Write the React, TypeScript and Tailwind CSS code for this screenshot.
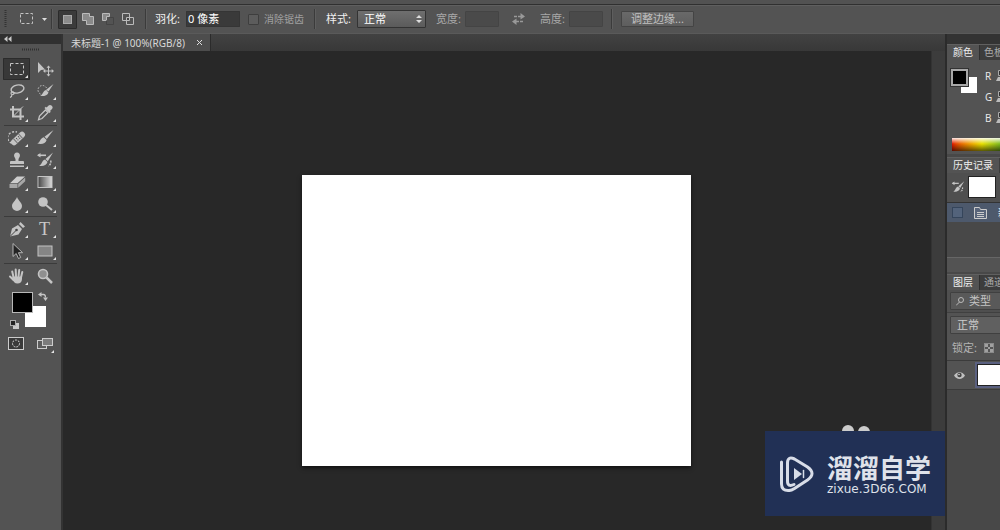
import React, { ReactNode } from "react";

function Icon({ size = 18, className = "", children }: { size?: number; className?: string; children: ReactNode }) {
  return (
    <svg width={size} height={size} viewBox="0 0 18 18" fill="none" stroke="none" className={"shrink-0 " + className} aria-hidden="true">
      {children}
    </svg>
  );
}

const C = "#c4c4c4";

const marquee = <rect x="2.5" y="3.5" width="13" height="11" stroke={C} strokeDasharray="3 2" />;
const move = (
  <g>
    <path d="M2 2v11l3-3 4-.6z" fill={C} />
    <path d="M12.500 6.500v9M8 11h9" stroke={C} />
    <path d="M12.500 5.500l2 2.300h-4zM12.500 16.500l2-2.300h-4zM7 11l2.300-2v4zM18 11l-2.300-2v4z" fill={C} />
  </g>
);
const lasso = (
  <g stroke={C} strokeWidth="1.400">
    <ellipse cx="9.500" cy="7" rx="6.500" ry="4" transform="rotate(-12 9.500 7)" />
    <path d="M4.500 9.500c-2 .5-2 3 0 3s2-2 .5-2.800M4 12.500c0 2-.8 2.500-2 3" strokeWidth="1.200" />
  </g>
);
const quickSelect = (
  <g>
    <circle cx="6.500" cy="8" r="4.500" stroke={C} strokeDasharray="1.500 1.500" />
    <path d="M17.500 2l-7 5.500 2 2zM10 8l2.500 2.500c-1 3-4.500 4-8.500 3.500 3-.8 2.500-5 6-6z" fill={C} />
  </g>
);
const crop = (
  <g stroke={C} strokeWidth="2">
    <path d="M5 2v10.500h11M2 5.500h10.500V16" />
    <path d="M5.500 12L15 2.500" strokeWidth="1" />
  </g>
);
const eyedropper = (
  <g>
    <path d="M15.800 1.800c1.300 1.300.9 2.400.2 3.100l-2 2 .8.800-1.300 1.300-5-5 1.300-1.300.8.800 2-2c.7-.7 1.900-1 3.200.3z" fill={C} />
    <path d="M9.500 6l2.500 2.500-6 6-3.500 1.300L3.500 12z" stroke={C} strokeWidth="1.300" />
  </g>
);
const heal = (
  <g>
    <path d="M3.500 14A7 6 0 0 1 9 3" stroke={C} strokeDasharray="2 1.500" strokeWidth="1.400" />
    <g transform="rotate(-43 10 9.500)">
      <rect x="1.500" y="6.500" width="17" height="6" rx="3" fill={C} />
      <path d="M6.500 6.500v6M13.500 6.500v6" stroke="#777" />
      <path d="M8.500 8.500h1M11 8.500h1M8.500 10.500h1M11 10.500h1" stroke="#444" />
    </g>
  </g>
);
const brush = <path d="M17.500 1L8.500 7.800l2.300 2.200zM7.800 8.300l2.800 2.800c-.9 3.400-4.600 4.700-9.400 3.500 3.200-.9 2.800-5.500 6.600-6.300z" fill={C} />;
const stamp = <path d="M9 1.500a3 3 0 0 1 2.800 4L10.500 8v2H15a1 1 0 0 1 1 1v2H2v-2a1 1 0 0 1 1-1h4.500V8L6.200 5.500A3 3 0 0 1 9 1.500zM2 14.500h14V16H2z" fill={C} />;
const historyBrush = (
  <g>
    <path d="M17 1.500L9.500 8l2.300 2.300zM9 8.500l2.500 2.500c-1 3.500-4.500 4.500-8.500 3.700 3-.7 2.500-5.200 6-6.200z" fill={C} />
    <path d="M2 4.300h8" stroke={C} strokeWidth="1.600" />
    <path d="M1 4.300L4.500 2v4.600z" fill={C} />
    <path d="M14.800 9.500c.3 2.500-.5 4.500-2.300 5.500" stroke={C} strokeWidth="1.500" strokeDasharray="2 1" />
  </g>
);
const eraser = (
  <g>
    <path d="M9 3.500h8l-7.500 6.800H2z" fill="#cdcdcd" />
    <path d="M1.500 11h8v4h-8zM10.200 10.800l7-6.300v3.800l-7 6.500z" fill="#a6a6a6" />
  </g>
);
const gradient = (
  <g>
    <defs>
      <linearGradient id="toolGradient"><stop stopColor="#444" /><stop offset="1" stopColor="#ddd" /></linearGradient>
    </defs>
    <rect x="2" y="3.500" width="14" height="11" fill="url(#toolGradient)" stroke={C} />
  </g>
);
const drop = <path d="M9 2c1.500 4 5 5.500 5 9a5 5 0 0 1-10 0C4 7.500 7.500 6 9 2z" fill={C} />;
const dodge = (
  <g>
    <circle cx="7" cy="7" r="4.800" fill={C} />
    <path d="M10 10l6 5" stroke={C} strokeWidth="2" />
  </g>
);
const pen = (
  <g>
    <path d="M2 16.500L4 8.500l6-3.500 4 4-3.500 5.500z" fill={C} />
    <path d="M11 4l1.500-2 4.500 4.500-2 1.500z" fill={C} />
    <path d="M2 16.500l6-6" stroke="#444" />
    <circle cx="8.500" cy="10" r="1.300" fill="#444" />
  </g>
);
const pathSelect = <path d="M5 1.500v13l3.200-3 2.300 5 2.200-1-2.300-4.800h4.200z" fill="#242424" stroke="#b4b4b4" strokeWidth="1" />;
const rectangle = <rect x="2" y="4" width="14" height="10" fill="#858585" stroke={C} />;
const hand = (
  <g>
    <path d="M4.500 9.500h9.500v2.500c0 3-2 4.500-4.500 4.500-3 0-4-2-5-4z" fill={C} />
    <path d="M5.500 10L4.200 4.500M8 9.500L7.700 2.500M10.500 9.500l.7-6.500M13 10.500l1.300-5.500M5.500 13L2 9.500" stroke={C} strokeWidth="2" strokeLinecap="round" />
  </g>
);
const zoomGlass = (
  <g>
    <circle cx="7" cy="7" r="4.500" fill="#8f8f8f" stroke={C} strokeWidth="1.600" />
    <path d="M10.500 10.500L16 16" stroke={C} strokeWidth="2.500" />
  </g>
);

type Tool = { label: string; icon: ReactNode; active?: boolean; single?: boolean };

const toolGroups: Tool[][] = [
  [
    { label: "矩形选框工具", icon: marquee, active: true },
    { label: "移动工具", icon: move, single: true },
    { label: "套索工具", icon: lasso },
    { label: "快速选择工具", icon: quickSelect },
    { label: "裁剪工具", icon: crop },
    { label: "吸管工具", icon: eyedropper },
  ],
  [
    { label: "污点修复画笔工具", icon: heal },
    { label: "画笔工具", icon: brush },
    { label: "仿制图章工具", icon: stamp },
    { label: "历史记录画笔工具", icon: historyBrush },
    { label: "橡皮擦工具", icon: eraser },
    { label: "渐变工具", icon: gradient },
    { label: "模糊工具", icon: drop },
    { label: "减淡工具", icon: dodge },
  ],
  [
    { label: "钢笔工具", icon: pen },
    { label: "文字工具", icon: null },
    { label: "路径选择工具", icon: pathSelect },
    { label: "矩形工具", icon: rectangle },
  ],
  [
    { label: "抓手工具", icon: hand },
    { label: "缩放工具", icon: zoomGlass, single: true },
  ],
];

function ToolButton({ tool }: { tool: Tool }) {
  return (
    <button
      type="button"
      aria-label={tool.label}
      className={
        "relative flex h-[22px] w-[27px] items-center justify-center rounded-[1px] " +
        (tool.active ? "bg-[#383838] shadow-[inset_0_0_0_1px_#2b2b2b]" : "")
      }
    >
      {tool.icon ? (
        <Icon size={18}>{tool.icon}</Icon>
      ) : (
        <span className="font-['Liberation_Serif',serif] text-[18px] leading-none text-[#c8c8c8]">T</span>
      )}
      {!tool.single && (
        <svg width="3" height="3" className="absolute bottom-0.5 right-0.5" aria-hidden="true"><path d="M3 0v3H0z" fill="#e4e4e4" /></svg>
      )}
    </button>
  );
}

function ToolPanel() {
  return (
    <aside className="flex w-[61px] shrink-0 flex-col bg-[#535353]">
      <div className="flex h-2.5 items-center bg-[#303030] pl-1">
        <svg width="8" height="6" aria-hidden="true"><path d="M3.500 0v6L0 3zM7.500 0v6L4 3z" fill="#c8c8c8" /></svg>
      </div>
      <div className="flex h-3.5 items-start justify-center pt-1">
        <svg width="17" height="3" aria-hidden="true"><path d="M0 1.500h17" stroke="#303030" strokeWidth="2" strokeDasharray="1 1" /></svg>
      </div>
      {toolGroups.map((group, i) => (
        <div key={i}>
          {i > 0 && <div className="mx-1 my-px h-px bg-[#3b3b3b]" />}
          <div className="grid grid-cols-2 gap-x-px px-[3px]">
            {group.map((t) => <ToolButton key={t.label} tool={t} />)}
          </div>
        </div>
      ))}
      <div className="relative mt-[3px] h-[38px]">
        <button type="button" aria-label="背景色" className="absolute left-[25px] top-4 size-[21px] bg-white" />
        <button type="button" aria-label="前景色" className="absolute left-3 top-0.5 size-[21px] border border-[#b8b8b8] bg-black" />
        <button type="button" aria-label="切换颜色" className="absolute left-[38px] top-0.5">
          <svg width="10" height="9"><path d="M2.500 2.500h3q2 0 2 3" stroke={C} strokeWidth="1.300" fill="none" /><path d="M0 2.500L3.500 0v5zM7.500 9L5 5.500h5z" fill={C} /></svg>
        </button>
        <button type="button" aria-label="默认颜色" className="absolute left-2.5 top-[30px]">
          <svg width="9" height="9"><rect x="3" y="3" width="6" height="6" fill="#c8c8c8" /><rect x=".5" y=".5" width="5" height="5" fill="#222" stroke="#aaa" /></svg>
        </button>
      </div>
      <div className="mt-[5px] grid grid-cols-2 px-[3px]">
        <button type="button" aria-label="快速蒙版" className="flex h-5 items-center pl-[5px]">
          <svg width="16" height="13"><rect x=".5" y=".5" width="15" height="12" fill="#3a3a3a" stroke="#ccc" /><circle cx="8" cy="6.500" r="3.500" stroke="#ddd" fill="none" strokeDasharray="2 1" /></svg>
        </button>
        <button type="button" aria-label="屏幕模式" className="relative flex h-5 items-center pl-1.5">
          <svg width="16" height="13"><rect x=".5" y="3.500" width="9" height="8" stroke="#ccc" fill="#5c5c5c" /><rect x="5.500" y="1.500" width="10" height="7" stroke="#ccc" fill="#7b7b7b" /></svg>
          <svg width="3" height="3" className="absolute bottom-0 right-1" aria-hidden="true"><path d="M3 0v3H0z" fill="#e4e4e4" /></svg>
        </button>
      </div>
    </aside>
  );
}

function Divider() {
  return <div className="h-5 w-0.5 shrink-0 border-r border-[#5e5e5e] bg-[#3b3b3b]" />;
}

const dimField = "h-4 w-[34px] rounded-[1px] border border-[#444] bg-[#4a4a4a] px-1";

function OptionsBar() {
  return (
    <header className="flex h-[29px] shrink-0 items-center overflow-hidden whitespace-nowrap border-y border-t-[#5f5f5f] border-b-[#5a5a5a] bg-[#535353] pb-px text-[#f0f0f0]">
      <svg width="3" height="18" className="ml-1 shrink-0" aria-hidden="true"><path d="M1.500 0v18" stroke="#333" strokeWidth="2" strokeDasharray="1 1" /></svg>
      <button type="button" aria-label="当前工具" className="ml-3 flex items-center gap-2">
        <svg width="15" height="12"><rect x="1.500" y=".5" width="12" height="10" stroke={C} fill="none" strokeDasharray="3 2" /></svg>
        <svg width="5" height="3"><path d="M0 0h5L2.500 3z" fill="#ddd" /></svg>
      </button>
      <div className="ml-1 mr-[5px]"><Divider /></div>
      <div className="flex items-center gap-0.5">
        <button type="button" aria-label="新选区" className="flex size-[19px] items-center justify-center rounded-[1px] border border-[#2b2b2b] bg-[#3b3b3b]">
          <svg width="9" height="9"><rect x=".5" y=".5" width="8" height="8" fill="#8b8b8b" stroke="#aaa" /></svg>
        </button>
        <button type="button" aria-label="添加到选区" className="flex h-5 w-[18px] items-center justify-center">
          <svg width="12" height="12"><path d="M.5.5h7v3h4v8h-7v-4h-4z" fill="#8a8a8a" stroke="#bbb" /></svg>
        </button>
        <button type="button" aria-label="从选区减去" className="flex h-5 w-[18px] items-center justify-center">
          <svg width="12" height="12"><path d="M.5.5h7v3h-3v4h-4z" fill="#8a8a8a" stroke="#bbb" /><path d="M7.500 4.500h4v7h-7v-4" fill="none" stroke="#444" /></svg>
        </button>
        <button type="button" aria-label="与选区交叉" className="flex h-5 w-[18px] items-center justify-center">
          <svg width="12" height="12"><path d="M.5.5h7v7h-7zM4.500 4.500h7v7h-7z" fill="none" stroke="#bbb" /><path d="M5 5h2v2H5z" fill="#444" /></svg>
        </button>
      </div>
      <div className="mx-2"><Divider /></div>
      <label htmlFor="feather" className="w-[31px]">羽化:</label>
      <input id="feather" defaultValue="0 像素" className="h-4 w-[54px] rounded-[1px] bg-[#3a3a3a] px-0.5 leading-4 text-white shadow-[inset_0_0_0_1px_#353535]" />
      <label className="ml-2 flex items-center gap-[5px] text-[10px] text-[#a0a0a0]">
        <input type="checkbox" disabled className="size-[11px] appearance-none rounded-[1px] border border-[#3e3e3e] bg-[#5c5c5c]" />
        消除锯齿
      </label>
      <div className="mx-2.5"><Divider /></div>
      <label htmlFor="style" className="w-[31px]">样式:</label>
      <div className="relative">
        <select id="style" className="h-[18px] w-[69px] appearance-none rounded-[1px] border border-[#333] bg-linear-to-b from-[#6f6f6f] to-[#5b5b5b] pl-1.5 leading-4 text-white">
          <option>正常</option>
        </select>
        <svg width="6" height="8" className="pointer-events-none absolute right-1 top-[5px]"><path d="M0 3L3 0l3 3zM0 5h6L3 8z" fill="#ddd" /></svg>
      </div>
      <label htmlFor="width" className="ml-2.5 w-[29px] text-[#a8a8a8]">宽度:</label>
      <input id="width" disabled className={dimField} />
      <button type="button" aria-label="交换宽高" className="mx-[13px]">
        <svg width="13" height="12"><path d="M2 3.500h7M4 8.500h7" stroke="#999" strokeWidth="1.500" strokeDasharray="3 1" /><path d="M8.500 0L13 3.500l-4.500 3zM4.500 5.500L0 8.500 4.500 12z" fill="#999" /></svg>
      </button>
      <label htmlFor="height" className="ml-0.5 w-[29px] text-[#a8a8a8]">高度:</label>
      <input id="height" disabled className={dimField} />
      <div className="mx-2"><Divider /></div>
      <button type="button" className="h-4 w-[73px] rounded-[1px] border border-[#444] bg-linear-to-b from-[#696969] to-[#5e5e5e] leading-3 text-[#c0c0c0]">
        调整边缘...
      </button>
    </header>
  );
}

function PanelTabs({ active, other }: { active: string; other?: string }) {
  return (
    <div role="tablist" className="flex h-4 shrink-0 whitespace-nowrap border-t border-[#606060] bg-[#3d3d3d]">
      <button type="button" role="tab" aria-selected="true" className="bg-[#535353] px-1.5 text-[10px] leading-[15px] text-[#eee]">{active}</button>
      {other && <button type="button" role="tab" aria-selected="false" className="border-l border-[#303030] px-1 text-[10px] leading-[15px] text-[#aaa]">{other}</button>}
    </div>
  );
}

function Channel({ name }: { name: string }) {
  return (
    <div className="flex h-[21px] items-center gap-[5px] text-[10px] text-[#e8e8e8]">
      <span className="w-1.5">{name}</span>
      <svg width="12" height="13" className="shrink-0" aria-hidden="true">
        <path d="M2.500 1.500h7v5h-7z" fill="#333" stroke="#aaa" />
        <path d="M2 8h8l2 4H0z" fill="#bbb" />
      </svg>
    </div>
  );
}

function SidePanels() {
  return (
    <aside className="flex w-[55px] shrink-0 flex-col overflow-hidden border-l-2 border-[#2b2b2b] bg-[#484848]">
      <div className="h-2.5 shrink-0 bg-[#333]" />
      <section className="h-[110px] shrink-0 bg-[#535353]">
        <PanelTabs active="颜色" other="色板" />
        <div className="flex h-[78px] pt-[5px]">
          <div className="relative w-[38px] shrink-0">
            <button type="button" aria-label="背景色" className="absolute left-3.5 top-3 size-4 bg-white" />
            <button type="button" aria-label="前景色" className="absolute left-1 top-1 size-[17px] border-2 border-[#a8a8a8] bg-black outline outline-[#333]" />
          </div>
          <div><Channel name="R" /><Channel name="G" /><Channel name="B" /></div>
        </div>
        <div className="ml-[5px] h-[13px] w-[150px] bg-linear-to-r from-[#e01000] via-[#e8e000] via-20% to-[#00a020] to-40%">
          <div className="h-full bg-linear-to-b from-white/90 via-transparent via-45% to-black/60" />
        </div>
      </section>
      <section className="mt-[3px] flex h-[115px] shrink-0 flex-col">
        <PanelTabs active="历史记录" />
        <div className="flex h-[29px] shrink-0 items-center bg-[#4f4f4f] pb-px">
          <Icon size={14} className="ml-1 mr-[3px]">{historyBrush}</Icon>
          <div className="h-[22px] w-7 shrink-0 border border-[#222] bg-white" />
        </div>
        <div className="flex h-5 shrink-0 items-center whitespace-nowrap border-t border-[#333] bg-[#4d596c] text-[#eee]">
          <input type="checkbox" aria-label="历史记录源" className="ml-[5px] size-[11px] shrink-0 appearance-none border border-[#35455b] bg-[#53637b]" />
          <svg width="13" height="13" className="mx-[11px] shrink-0" aria-hidden="true"><path d="M.5 12.500V1.500h5l1 2h6v9z" fill="#59657a" stroke="#ccc" /><path d="M3 6.500h7M3 8.500h7M3 10.500h7" stroke="#ccc" /></svg>
          <span>新建</span>
        </div>
        <div className="grow bg-[#484848]" />
        <div className="h-[15px] shrink-0 border-t border-[#666] bg-[#535353]" />
      </section>
      <section className="mt-0.5 flex grow flex-col">
        <PanelTabs active="图层" other="通道" />
        <div className="flex h-[22px] shrink-0 items-center bg-[#4f4f4f] pl-[3px]">
          <button type="button" className="flex h-[18px] w-16 shrink-0 items-center gap-[5px] rounded-[1px] border border-[#404040] bg-[#595959] pl-[5px] text-[#c4c4c4]">
            <svg width="8" height="9"><circle cx="5" cy="3" r="2.500" stroke="#bbb" fill="none" /><path d="M3.500 5L0 8.500" stroke="#bbb" /></svg>
            类型
          </button>
        </div>
        <div className="flex h-6 shrink-0 items-center border-t border-[#404040] bg-[#535353] pl-[3px]">
          <select aria-label="混合模式" className="h-[18px] w-24 shrink-0 appearance-none rounded-[1px] border border-[#404040] bg-[#606060] pl-1.5 leading-4 text-[#ccc]">
            <option>正常</option>
          </select>
        </div>
        <div className="flex h-6 shrink-0 items-center whitespace-nowrap bg-[#535353] pl-[5px] text-[#b4b4b4]">
          <span className="w-8 shrink-0">锁定:</span>
          <button type="button" aria-label="锁定透明像素" className="grid size-2.5 shrink-0 grid-cols-3 border border-[#8a8a8a]">
            {Array.from({ length: 9 }, (_, i) => <span key={i} className={i % 2 ? "bg-[#555]" : "bg-[#a0a0a0]"} />)}
          </button>
        </div>
        <div className="flex h-[30px] shrink-0 items-center border-y border-[#3b3b3b] bg-[#535353]">
          <button type="button" aria-label="图层可见性" className="ml-[7px] mr-2.5">
            <svg width="11" height="9"><path d="M0 4.500C2.500 0 8.500 0 11 4.500 8.500 9 2.500 9 0 4.500z" fill="#c0c0c0" /><circle cx="5.500" cy="4" r="2.200" fill="#444" /><circle cx="5" cy="3.500" r=".8" fill="#ddd" /></svg>
          </button>
          <div className="h-[26px] w-9 shrink-0 border-2 border-[#5a6080] bg-[#222] p-px"><div className="h-full bg-white" /></div>
        </div>
        <div className="grow bg-[#484848]" />
      </section>
    </aside>
  );
}

function Watermark() {
  return (
    <div className="absolute bottom-3.5 right-[55px]">
      <svg width="30" height="12" className="absolute -top-[7px] left-[76px]" aria-hidden="true"><circle cx="7" cy="7" r="6" fill="#ccc" /><circle cx="23" cy="8" r="6" fill="#ccc" /></svg>
      <div className="relative flex h-[85px] w-[180px] items-center bg-[#213055] pl-3.5 text-[#dfe2ea]">
        <svg width="36" height="38" viewBox="0 0 36 38" fill="none" stroke="#d8dde8" strokeWidth="3" strokeLinecap="round" aria-hidden="true">
          <path d="M2.500 7v22q0 7 7.500 6.500" />
          <path d="M15 29.500q-6.500 3-6.500-3.500V8q0-7 7-4l13 8q9 6.500 0 13l-13 8.500q-3 2-5.500 2" />
          <path d="M15 13v12l8-6z" fill="#d8dde8" stroke="none" />
          <path d="M24.500 15.500v7" strokeWidth="1.500" />
        </svg>
        <div className="ml-3 whitespace-nowrap">
          <div className="text-[26px] font-bold leading-[30px]">溜溜自学</div>
          <div className="font-['DejaVu_Sans','Liberation_Sans',sans-serif] text-[12px] leading-3">zixue.3D66.COM</div>
        </div>
      </div>
    </div>
  );
}

export default function App() {
  return (
    <div className="relative flex h-screen flex-col overflow-hidden bg-[#282828] font-['Noto_Sans','Noto_Sans_CJK_SC',sans-serif] text-[11px] leading-4">
      <div className="h-[5px] shrink-0 border-b border-[#303030] bg-[#525252]" />
      <OptionsBar />
      <div className="flex min-h-0 grow">
        <ToolPanel />
        <main className="flex min-w-0 grow flex-col border-l-2 border-[#333]">
          <div className="flex h-[17px] shrink-0 bg-linear-to-b from-[#424242] to-[#383838]">
            <div className="flex items-center gap-3 whitespace-nowrap border-r border-[#2b2b2b] bg-[#4d4d4d] px-2 text-[10px] text-[#d8d8d8]">
              <span>未标题-1 @ 100%(RGB/8)</span>
              <button type="button" aria-label="关闭"><svg width="5" height="5"><path d="M0 0l5 5M5 0L0 5" stroke="#ddd" /></svg></button>
            </div>
          </div>
          <div className="flex min-h-0 grow">
            <div className="flex grow items-start justify-center bg-[#282828] pr-0.5 pt-[124px]">
              <div className="h-[291px] w-[389px] bg-white shadow-[0_2px_4px_rgba(0,0,0,0.6)]" />
            </div>
            <div className="w-3.5 shrink-0 border-l border-[#333] bg-[#3c3c3c]" />
          </div>
        </main>
        <SidePanels />
      </div>
      <Watermark />
    </div>
  );
}
